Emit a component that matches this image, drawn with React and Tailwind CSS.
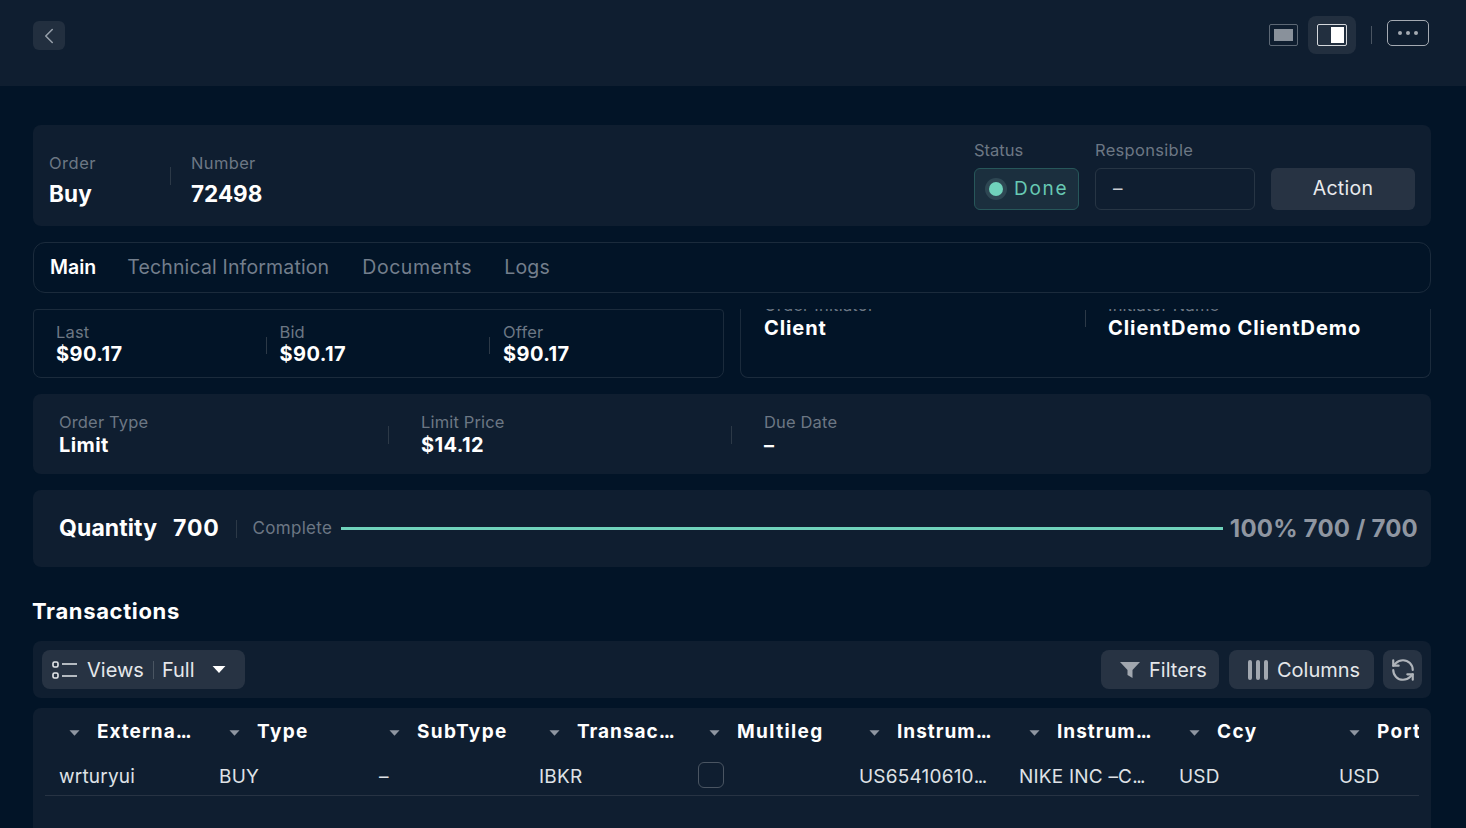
import React from "react";
import { ChevronLeft, RefreshCcw } from "lucide-react";

const columns = [
  { title: "Externa", more: true, value: "wrturyui" },
  { title: "Type", value: "BUY" },
  { title: "SubType", value: "–" },
  { title: "Transac", more: true, value: "IBKR" },
  { title: "Multileg", checkbox: true },
  { title: "Instrum", more: true, value: "US65410610", cut: true },
  { title: "Instrum", more: true, value: "NIKE INC –C", cut: true },
  { title: "Ccy", value: "USD" },
  { title: "Port", value: "USD" },
];

const Divider = ({ className = "" }) => <div className={`w-px shrink-0 ${className}`} />;

const Stat = ({ label, value, lead = "leading-[23px]" }) => (
  <div className="flex flex-col">
    <span className="text-[16.5px] leading-[22px] tracking-[0.15px] text-[#6c7784]">{label}</span>
    <span className={`text-[20px] font-bold tracking-[0.4px] text-white ${lead}`}>{value}</span>
  </div>
);

const Caret = ({ className = "" }) => (
  <svg width="12" height="6" viewBox="0 0 12 6" className={className}>
    <path d="M0.5 0h11L6 6z" fill="currentColor" />
  </svg>
);

const ToolButton = ({ children, className = "" }) => (
  <button className={`h-[39px] rounded-lg bg-[#273343] flex items-center text-[20px] text-[#e4e7ea] ${className}`}>
    {children}
  </button>
);

export default function App() {
  return (
    <div className="h-[828px] overflow-hidden bg-[#021427] [font-family:Inter,sans-serif]">
      <header className="h-[86px] bg-[#0f1e30] pl-[33px] pr-[37px] flex items-start justify-between">
        <button className="mt-[21px] w-8 h-[29px] rounded-md bg-[#222f3f] flex items-center justify-center text-[#97a0aa]">
          <ChevronLeft size={26} strokeWidth={1.4} />
        </button>
        <div className="flex items-start">
          <div className="mt-4 w-12 h-[38px] flex items-center justify-center pr-px">
            <div className="w-[29px] h-[22px] rounded-[2px] border border-[#5d6875] p-1">
              <div className="w-full h-full bg-[#89919b]" />
            </div>
          </div>
          <div className="mt-4 w-12 h-[38px] rounded-lg bg-[#222f3f] flex items-center justify-center">
            <div className="w-[30px] h-[22px] rounded-[2px] border border-[#d5d8dc] flex justify-end pr-0.5 py-0.5">
              <div className="w-[13px] h-full bg-white" />
            </div>
          </div>
          <Divider className="mt-[26px] ml-[15px] mr-[15px] h-[18px] bg-[#4a5562]" />
          <div className="mt-5 w-[42px] h-[26px] rounded-[5px] border-[1.5px] border-[#a4aab2] flex items-center justify-center gap-[4px]">
            <span className="w-1 h-1 rounded-full bg-[#a4aab2]" />
            <span className="w-1 h-1 rounded-full bg-[#a4aab2]" />
            <span className="w-1 h-1 rounded-full bg-[#a4aab2]" />
          </div>
        </div>
      </header>

      <main className="px-[33px] pr-[35px] pt-[39px] flex flex-col">
        <section className="h-[101px] rounded-lg bg-[#0f1e30] pl-4 pr-4 flex items-center justify-between">
          <div className="flex items-center">
            <div className="w-[121px] flex flex-col pt-[11px]">
              <span className="text-[16.5px] leading-[24px] tracking-[0.5px] text-[#6c7784]">Order</span>
              <span className="text-[22.5px] leading-[37px] font-bold tracking-[0.2px] text-white">Buy</span>
            </div>
            <Divider className="h-[18px] mr-5 bg-[#2c3947]" />
            <div className="flex flex-col pt-[11px]">
              <span className="text-[16.5px] leading-[24px] tracking-[0.35px] text-[#6c7784]">Number</span>
              <span className="text-[22.5px] leading-[37px] font-bold text-white">72498</span>
            </div>
          </div>
          <div className="flex items-end gap-4 pb-px">
            <div className="flex flex-col gap-2">
              <span className="text-[16.5px] leading-[20px] text-[#6c7784]">Status</span>
              <div className="w-[105px] h-[42px] rounded-md border border-[#27575a] bg-[#1b2f3e] flex items-center pl-2.5 gap-[7px] text-[19px] tracking-[1.7px] text-[#67c9b3]">
                <span className="w-[22px] h-[22px] rounded-full bg-[#2e4753] flex items-center justify-center">
                  <span className="w-[14px] h-[14px] rounded-full bg-[#70d3bc]" />
                </span>
                Done
              </div>
            </div>
            <div className="flex flex-col gap-2">
              <span className="text-[16.5px] leading-[20px] tracking-[0.3px] text-[#6c7784]">Responsible</span>
              <div className="w-40 h-[42px] rounded-md border border-[#273544] pl-[17px] flex items-center text-[19px] text-[#c9cdd2]">–</div>
            </div>
            <button className="w-36 h-[42px] rounded-md bg-[#273343] text-[19.5px] tracking-[0.3px] text-[#e8eaed]">Action</button>
          </div>
        </section>

        <nav className="mt-4 h-[51px] rounded-xl border border-[#1b2b3c] pl-4 flex items-center text-[19.5px] text-[#737e8c]">
          <span className="font-semibold text-white mr-[31px]">Main</span>
          <span className="tracking-[0.15px] mr-[33px]">Technical Information</span>
          <span className="tracking-[0.55px] mr-8">Documents</span>
          <span className="tracking-[0.25px]">Logs</span>
        </nav>

        <div className="mt-4 h-[69px] grid grid-cols-2 gap-4">
          <div className="rounded-b-lg rounded-t-sm border border-[#1b2b3c] pl-[22px] pt-[11px] grid grid-cols-[repeat(3,223.5px)]">
            {["Last", "Bid", "Offer"].map((label, i) => (
              <div key={label} className="flex">
                {i > 0 && <Divider className="h-[17px] mt-[16px] -ml-[14px] mr-[13px] bg-[#2c3947]" />}
                <Stat label={label} value="$90.17" />
              </div>
            ))}
          </div>
          <div className="rounded-b-lg border-x border-b border-[#1b2b3c] overflow-hidden pl-[23px] grid grid-cols-2">
            <div className="-mt-[15px] flex flex-col">
              <span className="text-[16.5px] leading-[22px] tracking-[0.2px] text-[#6c7784]">Order Initiator</span>
              <span className="text-[20px] leading-[24px] font-bold tracking-[0.9px] text-white">Client</span>
            </div>
            <div className="-mt-[15px] flex">
              <Divider className="h-[17px] mt-[16px] -ml-3 mr-[22px] bg-[#2c3947]" />
              <div className="flex flex-col">
                <span className="text-[16.5px] leading-[22px] tracking-[0.2px] text-[#6c7784]">Initiator Name</span>
                <span className="text-[20px] leading-[24px] font-bold tracking-[0.95px] text-white">ClientDemo ClientDemo</span>
              </div>
            </div>
          </div>
        </div>

        <section className="mt-4 h-20 rounded-lg bg-[#0f1e30] pl-[26px] pt-[17px] flex">
          <div className="w-[329px]"><Stat label="Order Type" value="Limit" lead="leading-[24px]" /></div>
          <Divider className="h-[18px] mt-[15px] mr-8 bg-[#2c3947]" />
          <div className="w-[310px]"><Stat label="Limit Price" value="$14.12" lead="leading-[24px]" /></div>
          <Divider className="h-[18px] mt-[15px] mr-8 bg-[#2c3947]" />
          <Stat label="Due Date" value="–" lead="leading-[24px]" />
        </section>

        <section className="mt-4 h-[77px] rounded-lg bg-[#0f1e30] pl-[26px] pr-[13px] flex items-center">
          <span className="text-[23px] font-bold tracking-[0.1px] text-white mr-4">Quantity</span>
          <span className="text-[23px] font-bold tracking-[0.8px] text-white">700</span>
          <Divider className="h-[18px] ml-4 mr-4 bg-[#2c3947]" />
          <span className="text-[17px] tracking-[0.3px] text-[#6c7784] mr-[9px]">Complete</span>
          <div className="flex-1 h-[3px] bg-[#70d3bc]" />
          <span className="ml-[7px] text-[24px] font-bold tracking-[0.2px] text-[#8f96a1]">100% 700 / 700</span>
        </section>

        <h2 className="mt-[30px] -ml-px text-[22px] leading-7 font-bold tracking-[0.65px] text-white">Transactions</h2>

        <section className="mt-[16px] h-[57px] rounded-lg bg-[#0f1e30] pl-[9px] pr-[9px] flex items-center justify-between">
          <ToolButton className="w-[203px] px-2.5">
            <svg width="26" height="18" viewBox="0 0 26 18" fill="none" stroke="#e4e7ea" strokeWidth="1.6" className="mr-[9px]">
              <rect x="1" y="1" width="5" height="5" rx="1.5" />
              <rect x="1" y="12" width="5" height="5" rx="1.5" />
              <path d="M10 3h15M10 15h15" />
            </svg>
            <span>Views</span>
            <Divider className="h-[18px] ml-[9px] mr-2 bg-[#4a5562]" />
            <span>Full</span>
            <Caret className="ml-[17px] w-[14px] h-[7px] text-white" />
          </ToolButton>
          <div className="flex items-center gap-[10px]">
            <ToolButton className="w-[118px] pl-[19px]">
              <svg width="20" height="16" viewBox="0 0 20 16" className="mr-[9px]">
                <path d="M0 0h20l-7.5 8v8l-5-3V8z" fill="#a1a7af" />
              </svg>
              Filters
            </ToolButton>
            <ToolButton className="w-[145px] pl-[19px]">
              <div className="flex gap-[4px] mr-[9px]">
                <span className="w-1 h-[20px] rounded-sm bg-[#a1a7af]" />
                <span className="w-1 h-[20px] rounded-sm bg-[#a1a7af]" />
                <span className="w-1 h-[20px] rounded-sm bg-[#a1a7af]" />
              </div>
              Columns
            </ToolButton>
            <ToolButton className="w-[39px] justify-center -ml-[1px]">
              <RefreshCcw size={26} strokeWidth={2} className="text-[#b0b5bb]" />
            </ToolButton>
          </div>
        </section>

        <section className="mt-[10px] h-40 rounded-lg bg-[#0f1e30] pl-3 pr-3">
          <div className="grid grid-cols-[repeat(9,160px)] w-full overflow-hidden h-[47px] pt-0.5 items-center">
            {columns.map((col, i) => (
              <div key={i} className={`flex items-center text-[19px] font-bold text-white whitespace-nowrap ${col.more ? "tracking-[1px]" : "tracking-[1.4px]"}`}>
                <Caret className="ml-6 mr-[17px] w-[11px] h-[6px] text-[#8f96a1]" />
                {col.title}
                {col.more && <span className="tracking-[-1.5px]">...</span>}
              </div>
            ))}
          </div>
          <div className="grid grid-cols-[repeat(9,160px)] w-full overflow-hidden h-[41px] pt-1 items-center border-b border-[#273343]">
            {columns.map((col, i) => (
              <div key={i} className="pl-[14px] text-[19px] tracking-[0.2px] text-[#dfe2e6] whitespace-nowrap">
                {col.checkbox ? (
                  <div className="w-[26px] h-[26px] -ml-[1px] -mt-1 rounded-md border border-[#4a5562]" />
                ) : (
                  col.value
                )}
                {col.cut && <span className="tracking-[-1.5px]">...</span>}
              </div>
            ))}
          </div>
        </section>
      </main>
    </div>
  );
}
